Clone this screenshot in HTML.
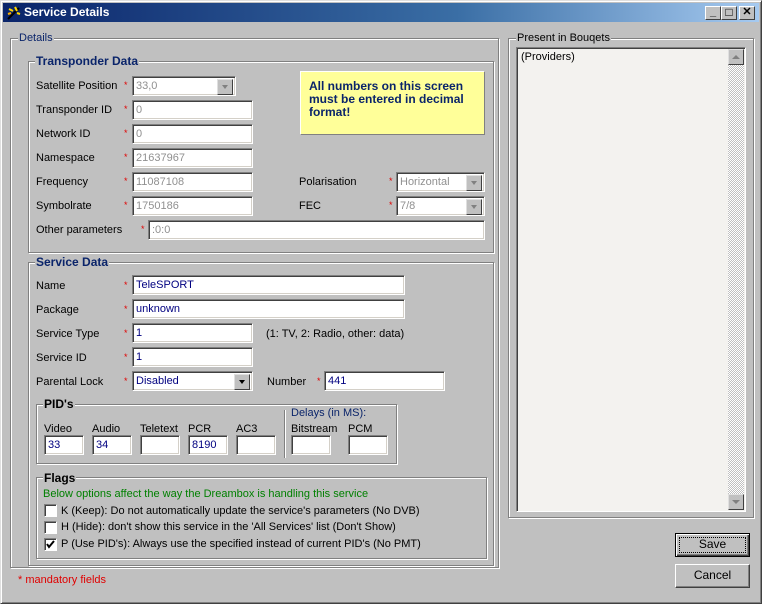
<!DOCTYPE html>
<html><head><meta charset="utf-8"><style>
*{box-sizing:border-box;margin:0;padding:0}
body{width:762px;height:604px;background:#c0c0c0;font-family:"Liberation Sans",sans-serif;font-size:11px;color:#000;position:relative;overflow:hidden}
.a{position:absolute}
.win{left:0;top:0;width:762px;height:604px;border:1px solid;border-color:#dfdfdf #404040 #404040 #dfdfdf;box-shadow:inset 1px 1px #fff,inset -1px -1px #808080}
.title{left:3px;top:3px;width:756px;height:19px;background:linear-gradient(90deg,#0a246a,#3a6ea5 60%,#a6caf0);color:#fff;font-weight:bold;font-size:12px;line-height:19px;padding-left:21px}
.tb{top:6px;width:16px;height:14px;background:#c0c0c0;border:1px solid;border-color:#fff #404040 #404040 #fff;color:#000;font-size:11px;line-height:11px;text-align:center;font-weight:bold}
.grp{border:1px solid #808080;box-shadow:1px 1px #fff,inset 1px 1px #fff}
.gl{background:#c0c0c0;padding:0 1px;line-height:12px}
.bold{font-weight:bold;color:#0a246a;font-size:12px}
.nv{color:#0a246a}
.inp{height:20px;background:#fff;border:1px solid;border-color:#808080 #fff #fff #808080;box-shadow:inset 1px 1px #404040,inset -1px -1px #d4d0c8;padding:2px 3px;line-height:14px;color:#000080;white-space:nowrap}
.dis{color:#909090}
.st{color:#e00000;font-size:9px}
.dd{width:16px;height:16px;top:2px;right:2px;background:#c0c0c0;border:1px solid;border-color:#dfdfdf #404040 #404040 #dfdfdf;position:absolute}
.dd:after{content:"";position:absolute;left:4px;top:5px;border:3.5px solid transparent;border-top:4px solid #000;border-bottom:0}
.dd.g:after{border-top-color:#808080}
.cb{width:13px;height:13px;background:#fff;border:1px solid;border-color:#808080 #fff #fff #808080;box-shadow:inset 1px 1px #404040}
.btn{width:75px;height:24px;background:#c0c0c0;border:1px solid;border-color:#fff #404040 #404040 #fff;box-shadow:inset -1px -1px #808080;text-align:center;line-height:21px;font-size:12px}
</style></head><body>
<div class="a win"></div>
<div class="a title">Service Details</div>
<svg class="a" style="left:6px;top:5px" width="16" height="16" viewBox="0 0 16 16"><path d="M2 14L13 3" stroke="#000" stroke-width="2"/><path d="M3 4l4 2M9 2l2 4M11 8l3 1" stroke="#ffd700" stroke-width="2"/><path d="M2 9l3-1" stroke="#ffb000" stroke-width="2"/></svg>
<div class="a tb" style="left:705px">_</div>
<div class="a tb" style="left:721px;font-size:12px">□</div>
<div class="a tb" style="left:739px">✕</div>

<!-- Details -->
<div class="a grp" style="left:10px;top:38px;width:489px;height:530px"></div>
<div class="a gl nv" style="left:18px;top:32px">Details</div>

<div class="a grp" style="left:28px;top:61px;width:466px;height:192px"></div>
<div class="a gl bold" style="left:35px;top:55px">Transponder Data</div>

<div class="a" style="left:36px;top:80px">Satellite Position</div>
<div class="a" style="left:36px;top:104px">Transponder ID</div>
<div class="a" style="left:36px;top:128px">Network ID</div>
<div class="a" style="left:36px;top:152px">Namespace</div>
<div class="a" style="left:36px;top:176px">Frequency</div>
<div class="a" style="left:36px;top:200px">Symbolrate</div>
<div class="a" style="left:36px;top:224px">Other parameters</div>
<div class="a st" style="left:124px;top:80px">*</div>
<div class="a st" style="left:124px;top:104px">*</div>
<div class="a st" style="left:124px;top:128px">*</div>
<div class="a st" style="left:124px;top:152px">*</div>
<div class="a st" style="left:124px;top:176px">*</div>
<div class="a st" style="left:124px;top:200px">*</div>
<div class="a st" style="left:141px;top:224px">*</div>
<div class="a inp dis" style="left:132px;top:76px;width:104px">33,0<div class="dd g"></div></div>
<div class="a inp dis" style="left:132px;top:100px;width:121px">0</div>
<div class="a inp dis" style="left:132px;top:124px;width:121px">0</div>
<div class="a inp dis" style="left:132px;top:148px;width:121px">21637967</div>
<div class="a inp dis" style="left:132px;top:172px;width:121px">11087108</div>
<div class="a inp dis" style="left:132px;top:196px;width:121px">1750186</div>
<div class="a inp dis" style="left:148px;top:220px;width:337px">:0:0</div>
<div class="a" style="left:300px;top:71px;width:185px;height:64px;background:#ffff99;border:1px solid;border-color:#fff #808080 #808080 #fff;padding:8px 0 0 8px;font-weight:bold;color:#0a246a;font-size:12px;line-height:13px">All numbers on this screen must be entered in decimal format!</div>
<div class="a" style="left:299px;top:176px">Polarisation</div>
<div class="a" style="left:299px;top:200px">FEC</div>
<div class="a st" style="left:389px;top:176px">*</div>
<div class="a st" style="left:389px;top:200px">*</div>
<div class="a inp dis" style="left:396px;top:172px;width:89px">Horizontal<div class="dd g"></div></div>
<div class="a inp dis" style="left:396px;top:196px;width:89px">7/8<div class="dd g"></div></div>

<!-- Service Data -->
<div class="a grp" style="left:28px;top:262px;width:466px;height:304px"></div>
<div class="a gl bold" style="left:35px;top:256px">Service Data</div>
<div class="a" style="left:36px;top:280px">Name</div>
<div class="a" style="left:36px;top:304px">Package</div>
<div class="a" style="left:36px;top:328px">Service Type</div>
<div class="a" style="left:36px;top:352px">Service ID</div>
<div class="a" style="left:36px;top:376px">Parental Lock</div>
<div class="a st" style="left:124px;top:280px">*</div>
<div class="a st" style="left:124px;top:304px">*</div>
<div class="a st" style="left:124px;top:328px">*</div>
<div class="a st" style="left:124px;top:352px">*</div>
<div class="a st" style="left:124px;top:376px">*</div>
<div class="a inp" style="left:132px;top:275px;width:273px">TeleSPORT</div>
<div class="a inp" style="left:132px;top:299px;width:273px">unknown</div>
<div class="a inp" style="left:132px;top:323px;width:121px">1</div>
<div class="a inp" style="left:132px;top:347px;width:121px">1</div>
<div class="a inp" style="left:132px;top:371px;width:121px">Disabled<div class="dd"></div></div>
<div class="a" style="left:266px;top:328px">(1: TV, 2: Radio, other: data)</div>
<div class="a" style="left:267px;top:376px">Number</div>
<div class="a st" style="left:317px;top:376px">*</div>
<div class="a inp" style="left:324px;top:371px;width:121px">441</div>

<div class="a grp" style="left:36px;top:404px;width:361px;height:60px"></div>
<div class="a gl bold" style="left:43px;top:398px;color:#000">PID's</div>
<div class="a" style="left:44px;top:423px">Video</div>
<div class="a" style="left:92px;top:423px">Audio</div>
<div class="a" style="left:140px;top:423px">Teletext</div>
<div class="a" style="left:188px;top:423px">PCR</div>
<div class="a" style="left:236px;top:423px">AC3</div>
<div class="a nv" style="left:291px;top:407px">Delays (in MS):</div>
<div class="a" style="left:291px;top:423px">Bitstream</div>
<div class="a" style="left:348px;top:423px">PCM</div>
<div class="a inp" style="left:44px;top:435px;width:40px">33</div>
<div class="a inp" style="left:92px;top:435px;width:40px">34</div>
<div class="a inp" style="left:140px;top:435px;width:40px"></div>
<div class="a inp" style="left:188px;top:435px;width:40px">8190</div>
<div class="a inp" style="left:236px;top:435px;width:40px"></div>
<div class="a inp" style="left:291px;top:435px;width:40px"></div>
<div class="a inp" style="left:348px;top:435px;width:40px"></div>
<div class="a" style="left:284px;top:410px;width:2px;height:48px;border-left:1px solid #808080;border-right:1px solid #fff"></div>

<div class="a grp" style="left:36px;top:477px;width:451px;height:82px"></div>
<div class="a gl bold" style="left:43px;top:472px;color:#000">Flags</div>
<div class="a" style="left:43px;top:488px;color:#008000">Below options affect the way the Dreambox is handling this service</div>
<div class="a cb" style="left:44px;top:504px"></div>
<div class="a cb" style="left:44px;top:521px"></div>
<div class="a cb" style="left:44px;top:538px"><svg width="11" height="11" style="position:absolute;left:0;top:0"><path d="M2 5l2 3 5-6" stroke="#000" stroke-width="2" fill="none"/></svg></div>
<div class="a" style="left:61px;top:505px">K (Keep): Do not automatically update the service's parameters (No DVB)</div>
<div class="a" style="left:61px;top:521px">H (Hide): don't show this service in the 'All Services' list (Don't Show)</div>
<div class="a" style="left:61px;top:538px">P (Use PID's): Always use the specified instead of current PID's (No PMT)</div>
<div class="a" style="left:18px;top:574px;color:#e00000">* mandatory fields</div>

<!-- Bouquets -->
<div class="a grp" style="left:508px;top:38px;width:246px;height:480px"></div>
<div class="a gl" style="left:516px;top:32px">Present in Bouqets</div>
<div class="a" style="left:516px;top:47px;width:230px;height:465px;background:#f3f2ef;border:1px solid;border-color:#808080 #fff #fff #808080;box-shadow:inset 1px 1px #404040;padding:3px 4px">(Providers)</div>
<div class="a" style="left:728px;top:49px;width:16px;height:461px;background:repeating-conic-gradient(#fff 0 25%,#c0c0c0 0 50%) 0 0/2px 2px"></div>
<div class="a" style="left:728px;top:49px;width:16px;height:16px;background:#c0c0c0;border:1px solid;border-color:#dfdfdf #404040 #404040 #dfdfdf"><div class="a" style="left:3px;top:5px;border:4px solid transparent;border-bottom:4px solid #808080;border-top:0"></div></div>
<div class="a" style="left:728px;top:494px;width:16px;height:16px;background:#c0c0c0;border:1px solid;border-color:#dfdfdf #404040 #404040 #dfdfdf"><div class="a" style="left:3px;top:5px;border:4px solid transparent;border-top:4px solid #808080;border-bottom:0"></div></div>

<div class="a btn" style="left:675px;top:533px;border:1px solid #000;box-shadow:inset 1px 1px #fff,inset -1px -1px #404040,inset -2px -2px #808080">Save<div class="a" style="left:3px;top:3px;right:3px;bottom:3px;border:1px dotted #000"></div></div>
<div class="a btn" style="left:675px;top:564px">Cancel</div>
</body></html>
